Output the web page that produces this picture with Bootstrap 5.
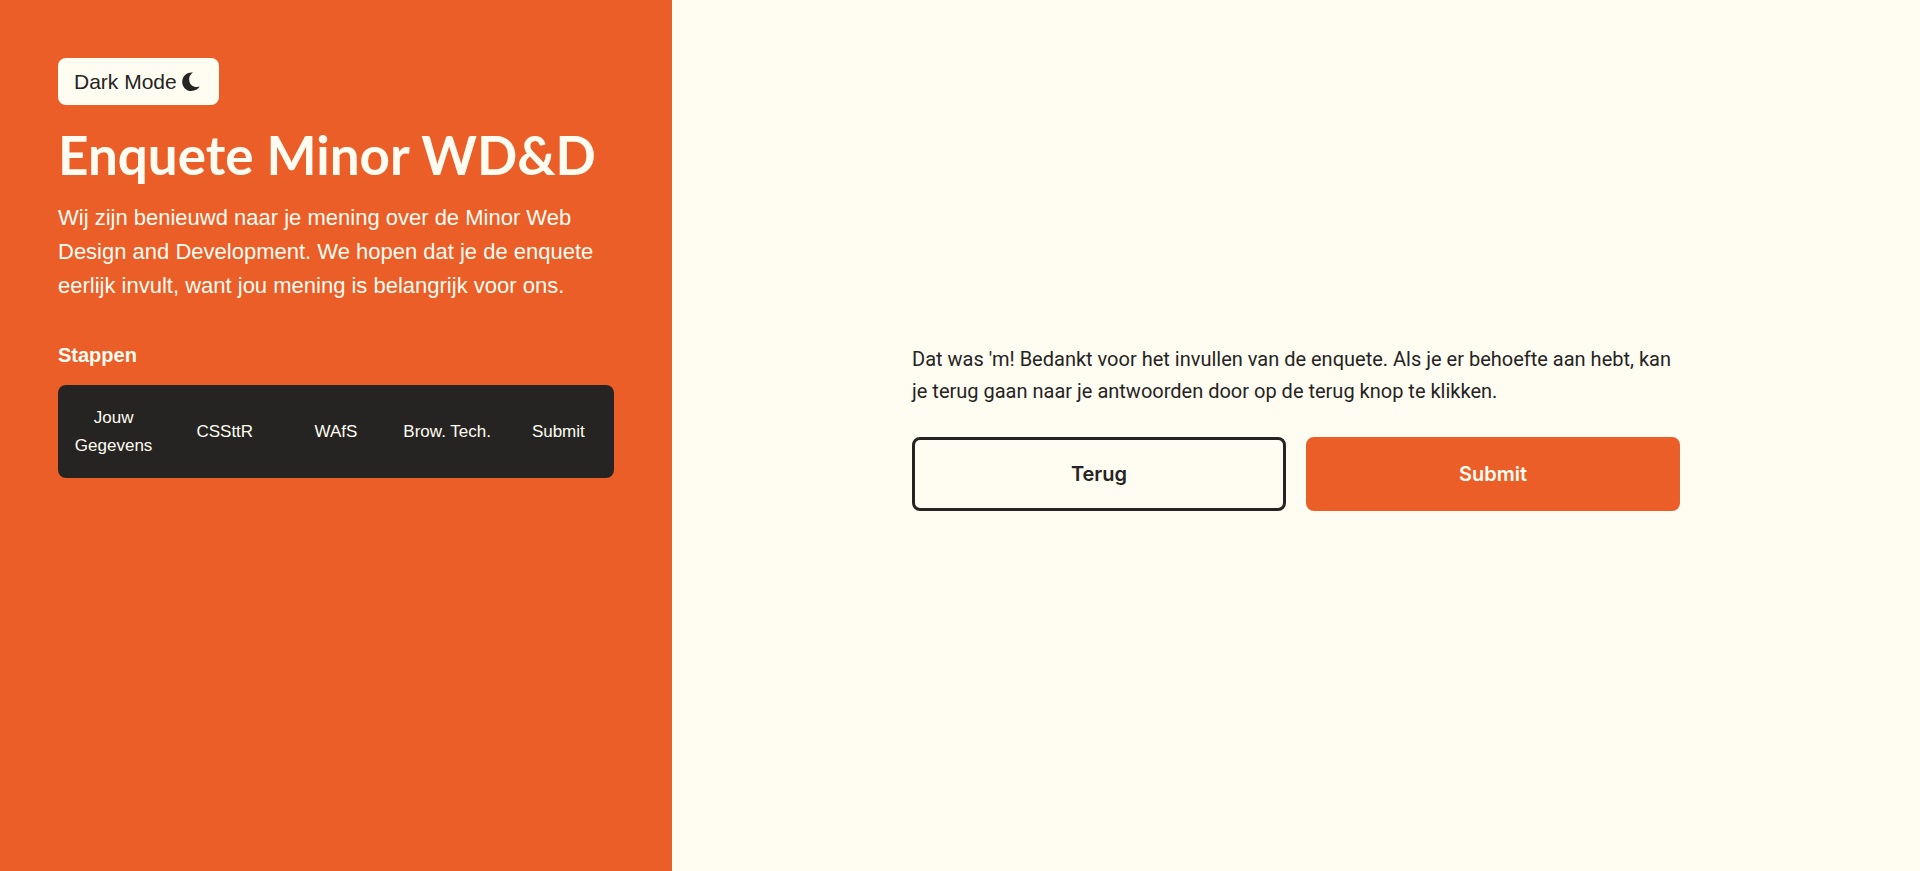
<!DOCTYPE html>
<html lang="nl">
<head>
<meta charset="utf-8">
<meta name="viewport" content="width=device-width, initial-scale=1">
<title>Enquete Minor WD&amp;D</title>
<link rel="stylesheet" href="https://cdn.jsdelivr.net/npm/bootstrap@5.3.0/dist/css/bootstrap.min.css">
<style>
  :root { --cream: #fffcf2; --ink: #252422; --flame: #eb5e28; }
  body { background: var(--cream); color: var(--ink); font-family: "Liberation Sans", Arial, sans-serif; }
  .intro { background: var(--flame); color: var(--cream); padding: 58px; }
  .intro h1 { font: 700 53px/68px Lato, sans-serif; margin: 16px 0 12px; }
  .intro-text { font-size: 22px; line-height: 34px; margin-bottom: 36px; }
  .intro h2 { font-size: 20px; line-height: 32px; font-weight: 700; margin-bottom: 14px; }
  .btn-mode { --bs-btn-bg: var(--cream); --bs-btn-color: var(--ink); --bs-btn-hover-bg: var(--ink); --bs-btn-hover-color: var(--cream);
    --bs-btn-border-width: 0; --bs-btn-border-radius: 8px; font-size: 21px; line-height: 31px; padding: 8px 18px 8px 16px; }
  .steps { background: var(--ink); border-radius: 8px; padding: 19px 0 18px; line-height: 28px; font-size: 17px; }
  .steps a { color: var(--cream); }
  .closing { font-family: Roboto, sans-serif; font-size: 20px; line-height: 32px; margin-bottom: 30px; }
  .form-col { width: 62%; padding-bottom: 18px; }
  .form-btn { --bs-btn-border-width: 3px; --bs-btn-border-radius: 8px; font: 600 20px/32px Inter, sans-serif; padding: 18px; }
  .form-btn-back { --bs-btn-color: var(--ink); --bs-btn-border-color: var(--ink); --bs-btn-hover-bg: var(--ink); --bs-btn-hover-color: var(--cream); }
  .form-btn-send { --bs-btn-color: var(--cream); --bs-btn-bg: var(--flame); --bs-btn-border-color: var(--flame); --bs-btn-hover-color: var(--cream); --bs-btn-hover-bg: var(--ink); }
  .form-actions { gap: 20px; }
  @media (min-width: 992px) {
    .intro { width: 35%; }
    .form-col { width: 768px; max-width: 90%; }
  }
</style>
</head>
<body>
<div class="d-flex flex-column flex-lg-row min-vh-100">
  <aside class="intro flex-shrink-0">
    <button type="button" class="btn btn-mode d-inline-flex align-items-center">Dark Mode
      <svg class="ms-1" width="20" height="20" viewBox="0 0 20 20" fill="currentColor" aria-hidden="true"><path d="M12 .6C9.400 2 7.800 4.800 8.200 8.200c.5 4.800 5 8 10.600 6.400-1.700 2.700-4.800 4.400-8.500 4.400C5.200 19 1.200 15 1.200 9.900 1.200 4.300 5.800-.1 12 .6z"/></svg>
    </button>
    <h1>Enquete Minor WD&amp;D</h1>
    <p class="intro-text">Wij zijn benieuwd naar je mening over de Minor Web Design and Development. We hopen dat je de enquete eerlijk invult, want jou mening is belangrijk voor ons.</p>
    <h2>Stappen</h2>
    <nav class="steps" aria-label="Stappen">
      <ol class="row row-cols-5 g-0 align-items-center text-center list-unstyled mb-0">
        <li class="col px-2"><a class="text-decoration-none" href="#gegevens">Jouw Gegevens</a></li>
        <li class="col"><a class="text-decoration-none" href="#cssttr">CSSttR</a></li>
        <li class="col"><a class="text-decoration-none" href="#wafs">WAfS</a></li>
        <li class="col"><a class="text-decoration-none" href="#browtech">Brow. Tech.</a></li>
        <li class="col"><a class="text-decoration-none" href="#submit">Submit</a></li>
      </ol>
    </nav>
  </aside>
  <main class="flex-grow-1 d-flex align-items-center justify-content-center py-4">
    <form class="form-col" id="submit">
      <p class="closing">Dat was 'm! Bedankt voor het invullen van de enquete. Als je er behoefte aan hebt, kan je terug gaan naar je antwoorden door op de terug knop te klikken.</p>
      <div class="form-actions d-flex">
        <button type="button" class="btn form-btn form-btn-back flex-fill w-50">Terug</button>
        <button type="submit" class="btn form-btn form-btn-send flex-fill w-50">Submit</button>
      </div>
    </form>
  </main>
</div>
<script src="https://cdn.jsdelivr.net/npm/bootstrap@5.3.0/dist/js/bootstrap.bundle.min.js"></script>
</body>
</html>
